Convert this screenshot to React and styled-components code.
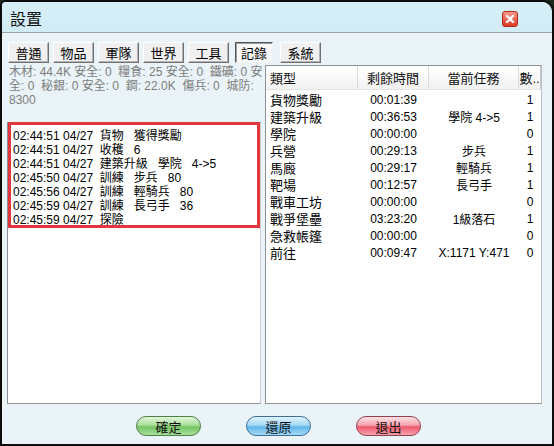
import styled, { createGlobalStyle } from "styled-components";

const GlobalStyle = createGlobalStyle`
  html, body {
    margin: 0;
    padding: 0;
    background: #1c2a1c;
  }
  body {
    font-family: "Liberation Sans", "Noto Sans CJK TC", sans-serif;
    font-size: 12px;
  }
`;

const tabs = ["普通", "物品", "軍隊", "世界", "工具", "記錄", "系統"];

const logs = [
  "02:44:51 04/27  貨物   獲得獎勵",
  "02:44:51 04/27  收穫   6",
  "02:44:51 04/27  建築升級   學院   4->5",
  "02:45:50 04/27  訓練   步兵   80",
  "02:45:56 04/27  訓練   輕騎兵   80",
  "02:45:59 04/27  訓練   長弓手   36",
  "02:45:59 04/27  探險",
];

const rows = [
  ["貨物獎勵", "00:01:39", "", "1"],
  ["建築升級", "00:36:53", "學院 4->5", "1"],
  ["學院", "00:00:00", "", "0"],
  ["兵營", "00:29:13", "步兵", "1"],
  ["馬廄", "00:29:17", "輕騎兵", "1"],
  ["靶場", "00:12:57", "長弓手", "1"],
  ["戰車工坊", "00:00:00", "", "0"],
  ["戰爭堡壘", "03:23:20", "1級落石", "1"],
  ["急救帳篷", "00:00:00", "", "0"],
  ["前往", "00:09:47", "X:1171 Y:471", "0"],
];

export default function App() {
  return (
    <>
      <GlobalStyle />
      <Window>
        <TitleBar>
          <Title>設置</Title>
          <CloseButton>
            <svg width="10" height="10" viewBox="0 0 10 10">
              <path d="M2 2 L8 8 M8 2 L2 8" stroke="#fff" strokeWidth="2.4" strokeLinecap="round" />
            </svg>
          </CloseButton>
        </TitleBar>

        <TabRow>
          {tabs.map((t) => (
            <Tab key={t} $active={t === "記錄"}>
              {t}
            </Tab>
          ))}
        </TabRow>

        <Content>
          <LeftColumn>
            <Info>
              <span>木材: 44.4K 安全: 0&nbsp;&nbsp;糧食: 25 安全: 0&nbsp;&nbsp;鐵礦: 0 安</span>
              <span>全: 0&nbsp;&nbsp;秘銀: 0 安全: 0&nbsp;&nbsp;鋼: 22.0K&nbsp;&nbsp;傷兵: 0&nbsp;&nbsp;城防:</span>
              <span>8300</span>
            </Info>
            <LogPanel>
              <LogBox>
                {logs.map((l, i) => (
                  <LogLine key={i}>{l}</LogLine>
                ))}
              </LogBox>
            </LogPanel>
          </LeftColumn>

          <ListPanel>
            <HeaderRow>
              <HeadCell $align="left">類型</HeadCell>
              <HeadCell>剩餘時間</HeadCell>
              <HeadCell>當前任務</HeadCell>
              <HeadCell $last>數..</HeadCell>
            </HeaderRow>
            <Rows>
              {rows.map((r) => (
                <Row key={r[0]}>
                  <Cell $align="left">{r[0]}</Cell>
                  <Cell>{r[1]}</Cell>
                  <Cell>{r[2]}</Cell>
                  <Cell>{r[3]}</Cell>
                </Row>
              ))}
            </Rows>
          </ListPanel>
        </Content>

        <Footer>
          <GelButton $tone="green">確定</GelButton>
          <GelButton $tone="blue">還原</GelButton>
          <GelButton $tone="red">退出</GelButton>
        </Footer>
      </Window>
    </>
  );
}

const tones = {
  green: { top: "#e2f6dc", mid: "#a8e098", bot: "#74c464", border: "#4f7f48" },
  blue: { top: "#e0f3fd", mid: "#a4d8f6", bot: "#62b6ea", border: "#3f6f96" },
  red: { top: "#fde2e6", mid: "#f8a2ae", bot: "#ec5a6c", border: "#94404c" },
};

const Window = styled.div`
  box-sizing: border-box;
  width: 554px;
  height: 446px;
  border: 2px solid #0c0c0c;
  border-radius: 6px 12px 0 0;
  background: #eaf4f8;
  display: flex;
  flex-direction: column;
  overflow: hidden;
`;

const TitleBar = styled.div`
  height: 30px;
  flex: none;
  display: flex;
  align-items: center;
  justify-content: space-between;
  padding: 0 34px 0 8px;
  background: linear-gradient(#d6eff9, #d2ecf6);
  border-bottom: 1px solid #9aa2a6;
`;

const Title = styled.div`
  font-size: 16px;
  color: #111;
  padding-top: 2px;
`;

const CloseButton = styled.div`
  width: 14px;
  height: 14px;
  border-radius: 3px;
  background: linear-gradient(#f59a88, #dc3a28);
  border: 1px solid #b22818;
  display: flex;
  align-items: center;
  justify-content: center;
  margin-top: 4px;
`;

const TabRow = styled.div`
  display: flex;
  gap: 4px;
  padding: 9px 0 0 6px;
  height: 21px;
  flex: none;
`;

const Tab = styled.div`
  box-sizing: border-box;
  width: ${(p) => (p.$active ? "38px" : "41px")};
  height: 21px;
  display: flex;
  align-items: center;
  justify-content: center;
  font-size: 13px;
  color: #000;
  background: ${(p) => (p.$active ? "#f7f7f7" : "#f0f0f0")};
  border: 1px solid;
  border-color: ${(p) =>
    p.$active ? "#555 #f4f4f4 #f4f4f4 #555" : "#ffffff #707070 #707070 #ffffff"};
  box-shadow: ${(p) =>
    p.$active ? "inset 1px 1px 0 #a0a0a0" : "inset -1px -1px 0 #b4b4b4"};
  margin-right: ${(p) => (p.$active ? "3px" : "0")};
  margin-left: ${(p) => (p.$active ? "2px" : "0")};
`;

const Content = styled.div`
  display: grid;
  grid-template-columns: 254px 277px;
  gap: 4px;
  padding: 2px 0 0 5px;
  height: 339px;
  flex: none;
`;

const LeftColumn = styled.div`
  display: flex;
  flex-direction: column;
`;

const Info = styled.div`
  display: flex;
  flex-direction: column;
  color: #7c7c7c;
  font-size: 12px;
  line-height: 14px;
  height: 57px;
  padding-left: 2px;
  white-space: nowrap;
`;

const LogPanel = styled.div`
  flex: 1;
  background: #fff;
  border: 1px solid #8c9296;
  border-right-color: #c8ced2;
  border-top: none;
`;

const LogBox = styled.div`
  box-sizing: border-box;
  height: 106px;
  border: 3px solid #e0383c;
  padding: 4px 0 0 2px;
`;

const LogLine = styled.div`
  white-space: pre;
  font-size: 12px;
  line-height: 14px;
  color: #000;
`;

const ListPanel = styled.div`
  background: #fff;
  border: 1px solid #8c9296;
  border-right-color: #b8c0c4;
  display: flex;
  flex-direction: column;
`;

const HeaderRow = styled.div`
  display: grid;
  grid-template-columns: 92px 71px 90px 22px;
  height: 23px;
  background: linear-gradient(#ffffff, #f2f2f2);
  border-bottom: 1px solid #e4e4e4;
`;

const HeadCell = styled.div`
  display: flex;
  align-items: center;
  justify-content: ${(p) => (p.$align === "left" ? "flex-start" : "center")};
  padding-left: ${(p) => (p.$align === "left" ? "4px" : "0")};
  font-size: 13px;
  color: #111;
  border-right: 1px solid ${(p) => (p.$last ? "#c8c8c8" : "#dadada")};
  overflow: hidden;
  white-space: nowrap;
`;

const Rows = styled.div`
  padding-top: 0;
`;

const Row = styled.div`
  display: grid;
  grid-template-columns: 92px 71px 90px 22px;
  height: 17px;
  align-items: center;
`;

const Cell = styled.div`
  text-align: ${(p) => (p.$align === "left" ? "left" : "center")};
  padding-left: ${(p) => (p.$align === "left" ? "4px" : "0")};
  font-size: ${(p) => (p.$align === "left" ? "13px" : "12px")};
  color: #000;
  white-space: nowrap;
`;

const Footer = styled.div`
  flex: 1;
  display: flex;
  justify-content: center;
  align-items: flex-start;
  gap: 45px;
  padding: 12px 0 0 3px;
`;

const GelButton = styled.div`
  box-sizing: border-box;
  width: 65px;
  height: 20px;
  border-radius: 10px;
  display: flex;
  align-items: center;
  justify-content: center;
  font-size: 13px;
  color: #111;
  border: 1px solid ${(p) => tones[p.$tone].border};
  background: linear-gradient(
    ${(p) => tones[p.$tone].top} 0%,
    ${(p) => tones[p.$tone].mid} 45%,
    ${(p) => tones[p.$tone].bot} 55%,
    ${(p) => tones[p.$tone].mid} 100%
  );
`;
